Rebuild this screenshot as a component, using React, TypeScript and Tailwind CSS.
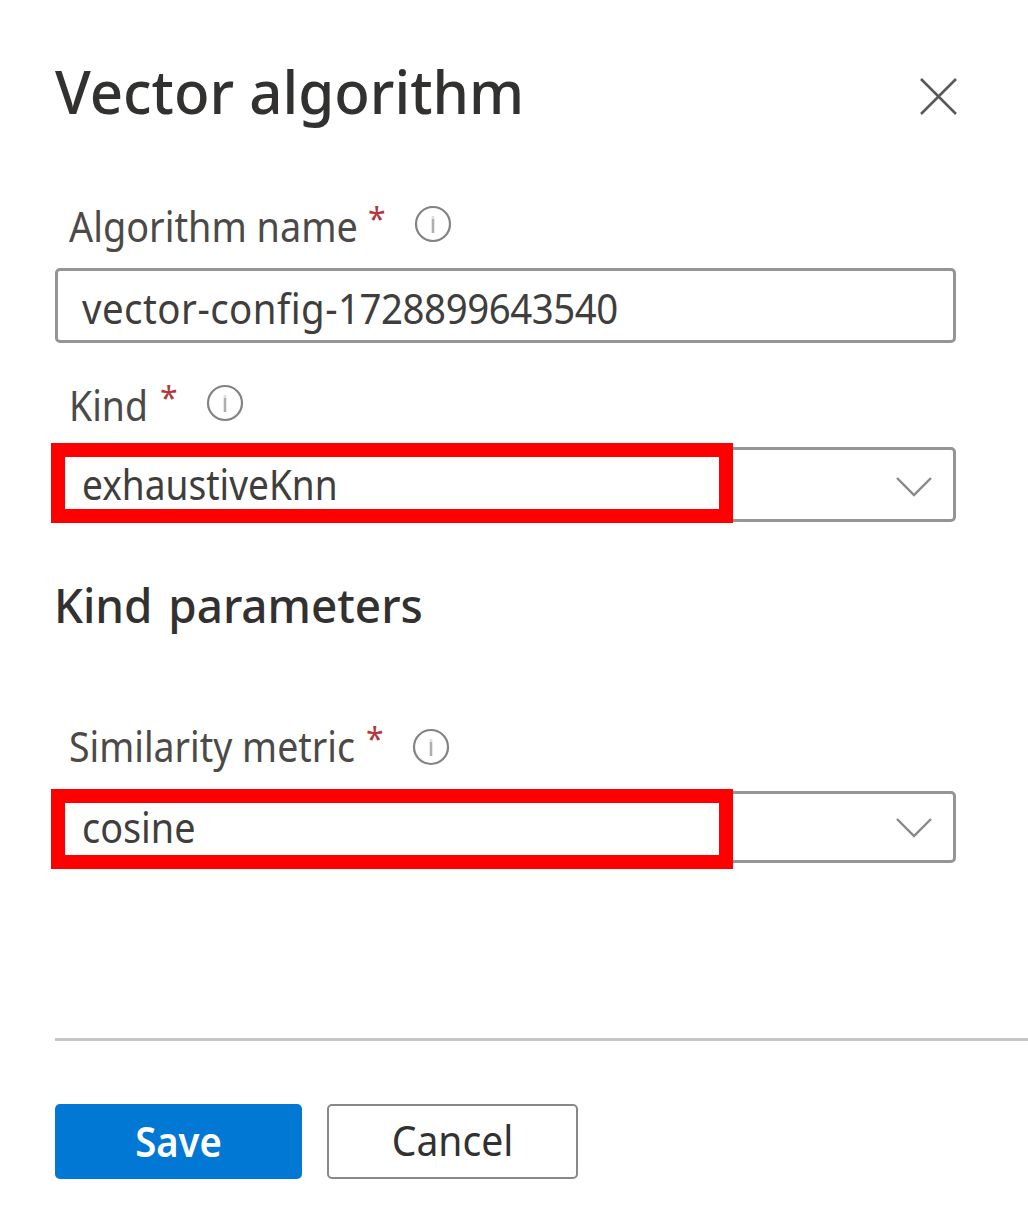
import type { ReactNode } from "react";

function InfoIcon() {
  return (
    <svg width="38" height="38" viewBox="0 0 38 38" fill="none" className="block shrink-0">
      <circle cx="19" cy="19" r="17" stroke="#858381" strokeWidth="2.2" />
      <path d="M19 14v14" stroke="#b0afad" strokeWidth="2.6" />
      <path d="M19 11v3" stroke="#dddddc" strokeWidth="2.6" />
    </svg>
  );
}

function Chevron() {
  return (
    <svg width="38" height="22" viewBox="0 0 38 22" fill="none" className="block">
      <path d="M2 2l17 17L36 2" stroke="#8a8886" strokeWidth="2.4" />
    </svg>
  );
}

function FieldLabel({ width, scale, iconTop, children }: { width: string; scale: string; iconTop: string; children: ReactNode }) {
  return (
    <div className="flex h-[60px] pl-[14px]">
      <div className={`${width} shrink-0 whitespace-nowrap`}>
        <span className={`mt-[2px] inline-block origin-left ${scale} text-[42px] leading-[60px] text-[#4c4a48]`}>{children}</span>
      </div>
      <span className="-mt-[5px] w-[18px] shrink-0 text-[32px] leading-[60px] text-[#b3383e]">*</span>
      <div className={`ml-[28px] ${iconTop}`}>
        <InfoIcon />
      </div>
    </div>
  );
}

function Select({ height, redTop, textShift, chevronTop, scale, children }: {
  height: string; redTop: string; textShift: string; chevronTop: string; scale: string; children: ReactNode;
}) {
  return (
    <div className={`relative ${height} w-[901px] rounded-[5px] border-3 border-[#979593]`}>
      <div className={`flex justify-end pr-[20px] ${chevronTop}`}>
        <Chevron />
      </div>
      <div className={`absolute -left-[7px] ${redTop} h-[80px] w-[682px] border-[14px] border-[#ff0000] bg-white pl-[17px]`}>
        <span className={`block origin-left ${scale} ${textShift} text-[42px] leading-[52px] whitespace-nowrap text-[#3f3e3d]`}>
          {children}
        </span>
      </div>
    </div>
  );
}

export default function App() {
  return (
    <main className="h-[1231px] w-[1028px] overflow-hidden bg-white pt-[49px] pl-[55px] font-['Noto_Sans',sans-serif] text-[#323130]">
      <header className="flex h-[80px] w-[904px] justify-between">
        <h1 className="mt-[2px] w-[480px] origin-left scale-x-[0.97] text-[60px] leading-[80px] font-medium whitespace-nowrap">Vector algorithm</h1>
        <button aria-label="Close" className="mt-[28px] h-[40px] w-[40px]">
          <svg width="40" height="40" viewBox="0 0 40 40" fill="none">
            <path d="M2 2l35 35M37 2L2 37" stroke="#5a5958" strokeWidth="2.6" />
          </svg>
        </button>
      </header>

      <section className="mt-[65px]">
        <FieldLabel width="w-[299px]" scale="scale-x-[0.9]" iconTop="pt-[11px]">Algorithm name</FieldLabel>
        <div className="mt-[14px] h-[75px] w-[901px] rounded-[5px] border-3 border-[#979593] pl-[24px]">
          <span className="mt-[1px] block origin-left scale-x-[0.915] text-[42px] leading-[72px] whitespace-nowrap text-[#3f3e3d]">
            <span className="tracking-[0.5px]">vector-config-</span>
            <span className="tracking-[-0.5px]">1728899643540</span>
          </span>
        </div>
      </section>

      <section className="mt-[30px]">
        <FieldLabel width="w-[91px]" scale="scale-x-[0.89]" iconTop="pt-[11px]">Kind</FieldLabel>
        <div className="mt-[14px]">
          <Select height="h-[75px]" redTop="-top-[7px]" textShift="mt-[1px]" chevronTop="pt-[26px]" scale="scale-x-[0.883]">
            exhaustiveKnn
          </Select>
        </div>
      </section>

      <h2 className="relative top-[2px] -ml-[1px] mt-[51px] origin-left scale-x-[0.955] text-[48px] leading-[60px] font-medium [word-spacing:4px] whitespace-nowrap">Kind parameters</h2>

      <section className="mt-[81px]">
        <FieldLabel width="w-[297px]" scale="scale-x-[0.892]" iconTop="pt-[14px]">Similarity metric</FieldLabel>
        <div className="mt-[17px]">
          <Select height="h-[72px]" redTop="-top-[5px]" textShift="-mt-[2px]" chevronTop="pt-[23px]" scale="scale-x-[0.9]">
            cosine
          </Select>
        </div>
      </section>

      <footer className="mt-[175px] border-t-[3px] border-[#c8c6c4] pt-[63px]">
        <div className="flex gap-[25px] text-[42px]">
          <button className="h-[75px] w-[247px] rounded-[5px] bg-[#0078d4] font-semibold text-white">
            <span className="-mt-[2px] block scale-x-[0.91] leading-[72px]">Save</span>
          </button>
          <button className="h-[75px] w-[251px] rounded-[5px] border-[2.5px] border-[#8a8886] text-[#323130]">
            <span className="-mt-[3px] block scale-x-[0.93] leading-[72px]">Cancel</span>
          </button>
        </div>
      </footer>
    </main>
  );
}
